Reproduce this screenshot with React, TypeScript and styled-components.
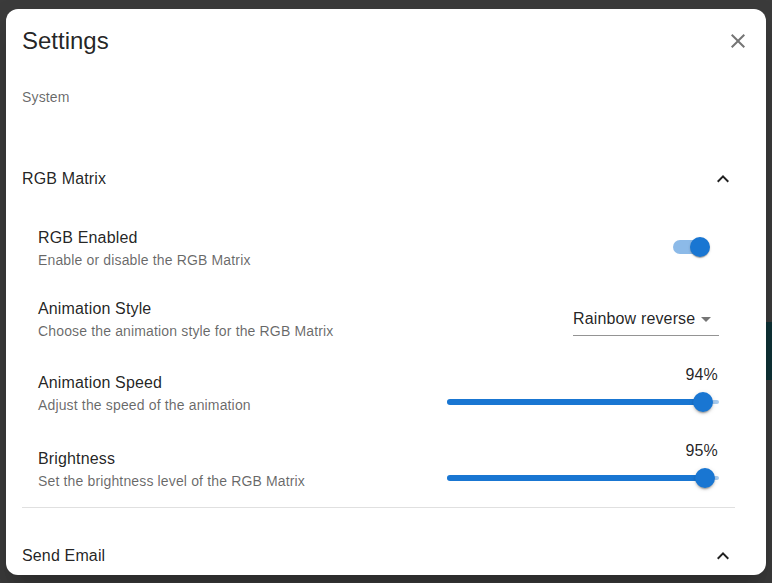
import styled, { createGlobalStyle } from "styled-components";

const GlobalStyle = createGlobalStyle`
  html, body {
    margin: 0;
    padding: 0;
    background: #3b3b3b;
    font-family: "Liberation Sans", Arial, sans-serif;
  }
`;

const Page = styled.div`
  position: relative;
  width: 772px;
  height: 583px;
  padding: 9px 6px 8px;
  box-sizing: border-box;
  overflow: hidden;
  background: #3b3b3b;
`;

// bit of the page under the backdrop that peeks out on the right
const UnderBlock = styled.div`
  position: absolute;
  right: 0;
  top: 322px;
  width: 8px;
  height: 58px;
  background: #0f3337;
`;

const Dialog = styled.div`
  position: relative;
  height: 566px;
  background: #ffffff;
  border-radius: 12px;
  overflow: hidden;
  box-shadow: 0 11px 15px -7px rgba(0, 0, 0, 0.2), 0 24px 38px 3px rgba(0, 0, 0, 0.14);
  color: rgba(0, 0, 0, 0.87);
`;

const Header = styled.div`
  display: flex;
  align-items: center;
  justify-content: space-between;
  padding: 16px 8px 0 16px;
  height: 32px;
`;

const Title = styled.h2`
  margin: 0;
  font-size: 24px;
  font-weight: 400;
  line-height: 32px;
`;

const IconButton = styled.button`
  display: flex;
  align-items: center;
  justify-content: center;
  width: 40px;
  height: 40px;
  border: 0;
  padding: 0;
  background: transparent;
  color: #757575;
  cursor: pointer;
`;

const Content = styled.div`
  padding: 0 31px 0 16px;
`;

const SectionLabel = styled.div`
  margin-top: 30px;
  font-size: 14px;
  line-height: 20px;
  letter-spacing: 0.15px;
  color: rgba(0, 0, 0, 0.6);
`;

const Summary = styled.div<{ $top: number }>`
  display: flex;
  align-items: center;
  justify-content: space-between;
  height: 48px;
  margin-top: ${(p) => p.$top}px;
  font-size: 16px;
  letter-spacing: 0.15px;
  color: rgba(0, 0, 0, 0.87);
`;

const Details = styled.div`
  padding: 24px 16px 15px;
  border-bottom: 1px solid #e0e0e0;
`;

const Row = styled.div<{ $h: number }>`
  display: flex;
  justify-content: space-between;
  align-items: flex-start;
  height: ${(p) => p.$h}px;
`;

const Info = styled.div<{ $pad?: number }>`
  padding-top: ${(p) => p.$pad ?? 0}px;
`;

const RowTitle = styled.div`
  font-size: 16px;
  line-height: 22px;
  letter-spacing: 0.15px;
  color: rgba(0, 0, 0, 0.87);
`;

const RowDesc = styled.div`
  margin-top: 1px;
  font-size: 14px;
  line-height: 20px;
  letter-spacing: 0.15px;
  color: rgba(0, 0, 0, 0.6);
`;

const SwitchWrap = styled.div`
  position: relative;
  flex: none;
  width: 37px;
  height: 20px;
  margin: 10px 9px 0 0;
`;

const SwitchTrack = styled.div`
  position: absolute;
  left: 0;
  top: 3px;
  width: 34px;
  height: 14px;
  border-radius: 7px;
  background: #1976d2;
  opacity: 0.5;
`;

const SwitchThumb = styled.div`
  position: absolute;
  right: 0;
  top: 0;
  width: 20px;
  height: 20px;
  border-radius: 50%;
  background: #1976d2;
  box-shadow: 0 2px 1px -1px rgba(0, 0, 0, 0.2), 0 1px 1px 0 rgba(0, 0, 0, 0.14),
    0 1px 3px 0 rgba(0, 0, 0, 0.12);
`;

const Select = styled.div`
  display: flex;
  flex: none;
  align-items: center;
  justify-content: space-between;
  width: 146px;
  margin-top: 9px;
  padding-bottom: 4px;
  border-bottom: 1px solid rgba(0, 0, 0, 0.42);
  font-size: 16px;
  line-height: 24px;
  letter-spacing: 0.15px;
  white-space: nowrap;
  color: rgba(0, 0, 0, 0.87);
`;

const SelectArrow = styled.span`
  display: flex;
  flex: none;
  width: 24px;
  margin-right: 1px;
  margin-left: -2px;
  color: rgba(0, 0, 0, 0.54);
`;

const SliderBox = styled.div`
  flex: none;
  width: 272px;
`;

const SliderValue = styled.div`
  text-align: right;
  padding-right: 1px;
  font-size: 16px;
  line-height: 20px;
  letter-spacing: 0.15px;
  color: rgba(0, 0, 0, 0.87);
`;

const SliderRoot = styled.div`
  position: relative;
  height: 20px;
  margin-top: 7px;
`;

const SliderRail = styled.div`
  position: absolute;
  left: 0;
  right: 0;
  top: 8px;
  height: 4px;
  border-radius: 2px;
  background: #1976d2;
  opacity: 0.38;
`;

const SliderTrack = styled.div`
  position: absolute;
  left: 0;
  top: 7px;
  height: 6px;
  border-radius: 3px;
  background: #1976d2;
`;

const SliderThumb = styled.div`
  position: absolute;
  top: 0;
  width: 20px;
  height: 20px;
  margin-left: -10px;
  border-radius: 50%;
  background: #1976d2;
  box-shadow: 0 3px 1px -2px rgba(0, 0, 0, 0.2), 0 2px 2px 0 rgba(0, 0, 0, 0.14),
    0 1px 5px 0 rgba(0, 0, 0, 0.12);
`;

const ChevronUp = () => (
  <svg width="24" height="24" viewBox="0 0 24 24" fill="rgba(0,0,0,0.87)">
    <path d="M12 8l-6 6 1.41 1.41L12 10.83l4.59 4.58L18 14z" />
  </svg>
);

const CloseIcon = () => (
  <svg width="24" height="24" viewBox="0 0 24 24" fill="currentColor">
    <path d="M19 6.41L17.59 5 12 10.59 6.41 5 5 6.41 10.59 12 5 17.59 6.41 19 12 13.41 17.59 19 19 17.59 13.41 12z" />
  </svg>
);

const Slider = ({ value }: { value: number }) => (
  <SliderBox>
    <SliderValue>{value}%</SliderValue>
    <SliderRoot>
      <SliderRail />
      <SliderTrack style={{ width: `${value}%` }} />
      <SliderThumb style={{ left: `${value}%` }} />
    </SliderRoot>
  </SliderBox>
);

export default function App() {
  return (
    <>
      <GlobalStyle />
      <Page>
        <UnderBlock />
        <Dialog>
          <Header>
            <Title>Settings</Title>
            <IconButton aria-label="close">
              <CloseIcon />
            </IconButton>
          </Header>
          <Content>
            <SectionLabel>System</SectionLabel>

            <Summary $top={48}>
              <span>RGB Matrix</span>
              <ChevronUp />
            </Summary>
            <Details>
              <Row $h={71}>
                <Info>
                  <RowTitle>RGB Enabled</RowTitle>
                  <RowDesc>Enable or disable the RGB Matrix</RowDesc>
                </Info>
                <SwitchWrap>
                  <SwitchTrack />
                  <SwitchThumb />
                </SwitchWrap>
              </Row>
              <Row $h={67}>
                <Info>
                  <RowTitle>Animation Style</RowTitle>
                  <RowDesc>Choose the animation style for the RGB Matrix</RowDesc>
                </Info>
                <Select>
                  <span>Rainbow reverse</span>
                  <SelectArrow>
                    <svg width="24" height="24" viewBox="0 0 24 24" fill="currentColor">
                      <path d="M7 10l5 5 5-5z" />
                    </svg>
                  </SelectArrow>
                </Select>
              </Row>
              <Row $h={76}>
                <Info $pad={7}>
                  <RowTitle>Animation Speed</RowTitle>
                  <RowDesc>Adjust the speed of the animation</RowDesc>
                </Info>
                <Slider value={94} />
              </Row>
              <Row $h={51}>
                <Info $pad={7}>
                  <RowTitle>Brightness</RowTitle>
                  <RowDesc>Set the brightness level of the RGB Matrix</RowDesc>
                </Info>
                <Slider value={95} />
              </Row>
            </Details>

            <Summary $top={24}>
              <span>Send Email</span>
              <ChevronUp />
            </Summary>
          </Content>
        </Dialog>
      </Page>
    </>
  );
}
